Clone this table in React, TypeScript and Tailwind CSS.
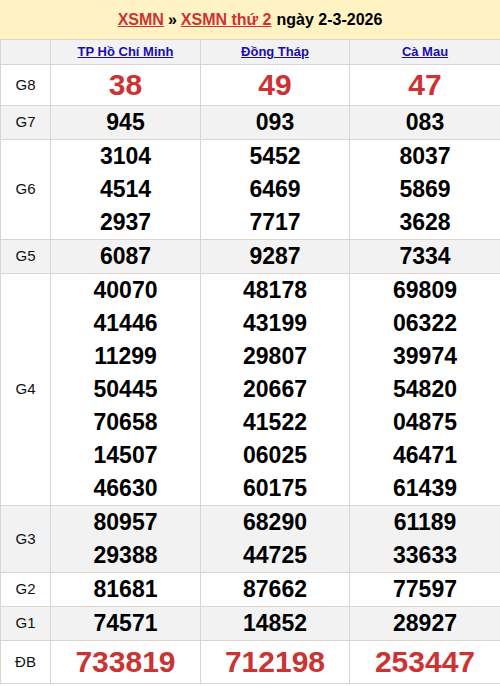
const rows: { label: string; cols: string[][]; big?: boolean; gray?: boolean; h?: string }[] = [
  { label: 'G8', cols: [['38'], ['49'], ['47']], big: true, h: 'h-[40px]' },
  { label: 'G7', cols: [['945'], ['093'], ['083']], gray: true },
  { label: 'G6', cols: [['3104', '4514', '2937'], ['5452', '6469', '7717'], ['8037', '5869', '3628']] },
  { label: 'G5', cols: [['6087'], ['9287'], ['7334']], gray: true },
  {
    label: 'G4',
    cols: [
      ['40070', '41446', '11299', '50445', '70658', '14507', '46630'],
      ['48178', '43199', '29807', '20667', '41522', '06025', '60175'],
      ['69809', '06322', '39974', '54820', '04875', '46471', '61439'],
    ],
  },
  { label: 'G3', cols: [['80957', '29388'], ['68290', '44725'], ['61189', '33633']], gray: true },
  { label: 'G2', cols: [['81681'], ['87662'], ['77597']] },
  { label: 'G1', cols: [['74571'], ['14852'], ['28927']], gray: true },
  { label: 'ĐB', cols: [['733819'], ['712198'], ['253447']], big: true, h: 'h-[43px]' },
];

const provinces = ['TP Hồ Chí Minh', 'Đồng Tháp', 'Cà Mau'];

export default function App() {
  return (
    <div className="w-[500px] bg-white font-['Liberation_Sans',Arial,sans-serif]">
      <div className="h-[39px] bg-[#fff3c4] flex items-center justify-center text-[16px] font-bold text-black">
        <a className="text-[#cc3333] underline">XSMN</a>
        <span className="mx-[4px]">»</span>
        <a className="text-[#cc3333] underline">XSMN thứ 2</a>
        <span className="ml-[5px]">ngày 2-3-2026</span>
      </div>
      <table className="w-[500px] border-collapse table-fixed">
        <colgroup>
          <col className="w-[50px]" />
          <col className="w-[150px]" />
          <col className="w-[149px]" />
          <col className="w-[151px]" />
        </colgroup>
        <thead>
          <tr className="bg-[#f2f2f2]">
            <th className="border border-[#ddd5cc] h-[25px] p-0"></th>
            {provinces.map((p) => (
              <th key={p} className="border border-[#ddd5cc] h-[25px] p-0 text-[13px] font-bold text-[#1a0dab]">
                <a className="underline">{p}</a>
              </th>
            ))}
          </tr>
        </thead>
        <tbody>
          {rows.map((r) => (
            <tr key={r.label} className={r.gray ? 'bg-[#f2f2f2]' : 'bg-white'}>
              <td className={`border border-[#ddd5cc] p-0 text-center text-[15px] text-[#111] ${r.h ?? ''}`}>{r.label}</td>
              {r.cols.map((c, i) => (
                <td key={i} className={`border border-[#ddd5cc] p-0 text-center font-bold ${r.h ?? ''}`}>
                  {c.map((n) =>
                    r.big ? (
                      <div key={n} className="text-[30px] leading-[40px] text-[#cc3333]">{n}</div>
                    ) : (
                      <div key={n} className="text-[23px] leading-[33px] text-black">{n}</div>
                    )
                  )}
                </td>
              ))}
            </tr>
          ))}
        </tbody>
      </table>
    </div>
  );
}
